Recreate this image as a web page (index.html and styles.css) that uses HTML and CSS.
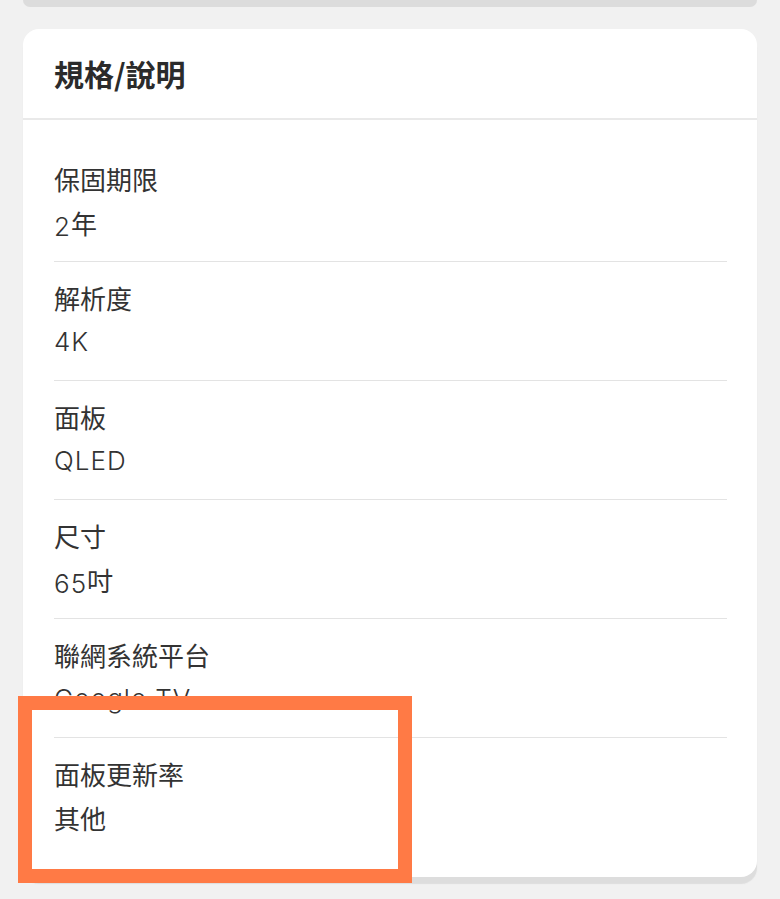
FILE: index.html
```html
<!DOCTYPE html>
<html lang="zh-Hant">
<head>
<meta charset="utf-8">
<title>規格/說明</title>
<link rel="stylesheet" href="styles.css">
</head>
<body>
<div class="page">
  <div class="prev-card"></div>
  <section class="card">
    <header class="card-header">
      <h2 class="card-title">規格/說明</h2>
    </header>
    <div class="spec-list">
      <div class="spec-row">
        <div class="spec-label">保固期限</div>
        <div class="spec-value">2<span class="cjk">年</span></div>
      </div>
      <div class="spec-row">
        <div class="spec-label">解析度</div>
        <div class="spec-value">4K</div>
      </div>
      <div class="spec-row">
        <div class="spec-label">面板</div>
        <div class="spec-value">QLED</div>
      </div>
      <div class="spec-row">
        <div class="spec-label">尺寸</div>
        <div class="spec-value">65<span class="cjk">吋</span></div>
      </div>
      <div class="spec-row">
        <div class="spec-label">聯網系統平台</div>
        <div class="spec-value">Google TV</div>
      </div>
      <div class="spec-row">
        <div class="spec-label">面板更新率</div>
        <div class="spec-value"><span class="cjk">其他</span></div>
      </div>
    </div>
  </section>
  <div class="highlight"></div>
</div>
</body>
</html>
```

FILE: styles.css
```css
* { box-sizing: border-box; }

html, body {
  margin: 0;
  padding: 0;
  background: #f1f1f1;
}

body {
  font-family: "Noto Sans CJK TC", "Noto Sans", sans-serif;
  color: #333333;
}

.page {
  position: relative;
  width: 780px;
  height: 899px;
  overflow: hidden;
}

.prev-card {
  height: 7px;
  margin: 0 23px;
  background: #dcdcdc;
  border-radius: 0 0 14px 14px;
}

.card {
  margin: 22px 23px 0;
  background: #ffffff;
  border-radius: 16px;
  box-shadow: 0 7px 1px #dddddd;
  overflow: hidden;
}

.card-header {
  height: 91px;
  display: flex;
  align-items: center;
  padding: 0 31px 2px;
  border-bottom: 2px solid #e9e9e9;
}

.card-title {
  margin: 0;
  font-size: 30px;
  font-weight: 700;
  line-height: 40px;
  color: #2b2b2b;
}

.spec-list {
  padding: 23px 30px 21px 31px;
}

.spec-row {
  padding: 18px 0 20px;
  border-bottom: 1px solid #e3e3e3;
}

.spec-row:last-child {
  border-bottom: none;
}

.spec-label {
  font-size: 26px;
  line-height: 36px;
  color: #333333;
}

.spec-value {
  margin-top: 8px;
  height: 36px;
  font-family: Inter, "Noto Sans CJK TC", sans-serif;
  font-size: 26px;
  font-weight: 300;
  line-height: 36px;
  letter-spacing: 1px;
  color: #333333;
}

.cjk {
  font-family: "Noto Sans CJK TC", sans-serif;
  font-weight: 400;
  letter-spacing: 0;
  vertical-align: 2px;
}

.highlight {
  position: absolute;
  left: 18px;
  top: 696px;
  width: 394px;
  height: 187px;
  border: 14px solid #ff7a45;
}
```
